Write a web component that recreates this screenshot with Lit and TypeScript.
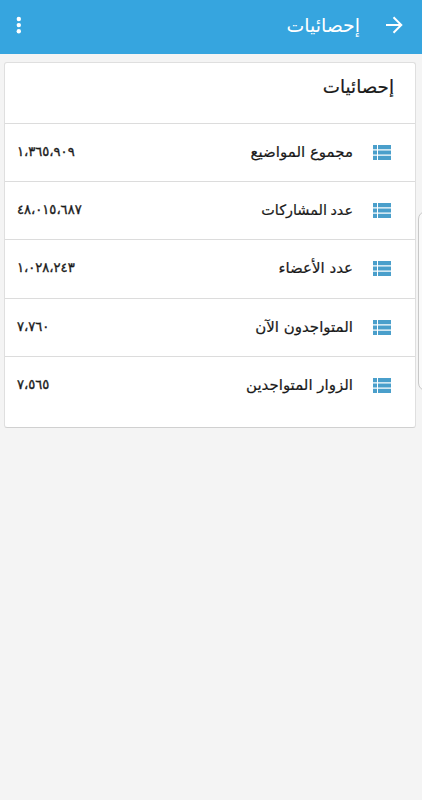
import { LitElement, html, css } from "lit";
import { customElement } from "lit/decorators.js";
import { classMap } from "lit/directives/class-map.js";

interface Stat {
  label: string;
  value: string;
  tight?: boolean;
}

const STATS: Stat[] = [
  { label: "مجموع المواضيع", value: "١،٣٦٥،٩٠٩" },
  { label: "عدد المشاركات", value: "٤٨،٠١٥،٦٨٧", tight: true },
  { label: "عدد الأعضاء", value: "١،٠٢٨،٢٤٣" },
  { label: "المتواجدون الآن", value: "٧،٧٦٠" },
  { label: "الزوار المتواجدين", value: "٧،٥٦٥" },
];

@customElement("app-root")
export class AppRoot extends LitElement {
  static styles = css`
    :host {
      display: block;
      position: relative;
      height: 800px;
      overflow: hidden;
      box-sizing: border-box;
      background: #f4f4f4;
      color: #1a1a1a;
      direction: rtl;
      font-family: "DejaVu Sans", sans-serif;
    }
    .bar {
      height: 54px;
      box-sizing: border-box;
      padding: 0 19px 4px 14px;
      display: flex;
      align-items: center;
      background: #36a5df;
      color: #fff;
    }
    .arrow { width: 18px; height: 18px; }
    .heading { margin-right: 25px; font-size: 18.9px; line-height: 28px; flex: 1; }
    .dots { width: 10px; height: 18px; }
    .card {
      margin: 8px 6px 0 4px;
      height: 366px;
      box-sizing: border-box;
      background: #fff;
      border: 1px solid #dfdfdf;
      border-bottom-color: #d0d0d0;
      border-radius: 3px;
    }
    .title {
      height: 60px;
      box-sizing: border-box;
      padding: 10px 21px 0 0;
      font-size: 18.3px;
      line-height: 28px;
      -webkit-text-stroke: 0.2px currentColor;
    }
    .row {
      height: 58.2px;
      box-sizing: border-box;
      border-top: 1px solid #dcdcdc;
      padding: 0 24px 0 12px;
      display: flex;
      align-items: center;
      font-size: 15px;
      line-height: 24px;
      -webkit-text-stroke: 0.2px currentColor;
    }
    .icon { width: 18px; height: 15px; flex: none; }
    .label { margin-right: 20px; flex: 1; padding-bottom: 1px; }
    .tight { font-size: 14.4px; word-spacing: -1px; }
    .value { direction: ltr; font-size: 13.1px; padding-bottom: 1px; -webkit-text-stroke-width: 0.35px; }
    .handle {
      position: absolute;
      left: 418px;
      top: 211px;
      width: 20px;
      height: 178px;
      border: 1px solid #c8c8c8;
      border-radius: 8px;
      background: #fafafa;
    }
  `;

  render() {
    return html`
      <header class="bar">
        <svg class="arrow" viewBox="0 0 18 18" fill="none" stroke="#fff" stroke-width="2">
          <path d="M1 9H16M8.5 1.2L16.3 9L8.5 16.8" />
        </svg>
        <span class="heading">إحصائيات</span>
        <svg class="dots" viewBox="0 0 10 18" fill="#fff">
          <circle cx="4.8" cy="3" r="2.2" /><circle cx="4.8" cy="9.1" r="2.2" /><circle cx="4.8" cy="15.2" r="2.2" />
        </svg>
      </header>
      <section class="card">
        <div class="title"><span>إحصائيات</span></div>
        ${STATS.map(
          (s) => html`<div class="row">
            <svg class="icon" viewBox="0 0 18 15" fill="#4a9fcb">
              <path d="M0 0H4V4.2H0ZM5 0H18V4.2H5ZM0 5.4H4V9.6H0ZM5 5.4H18V9.6H5ZM0 10.8H4V15H0ZM5 10.8H18V15H5Z" />
            </svg>
            <span class=${classMap({ label: true, tight: !!s.tight })}>${s.label}</span>
            <span class="value">${s.value}</span>
          </div>`
        )}
      </section>
      <div class="handle"></div>
    `;
  }
}
